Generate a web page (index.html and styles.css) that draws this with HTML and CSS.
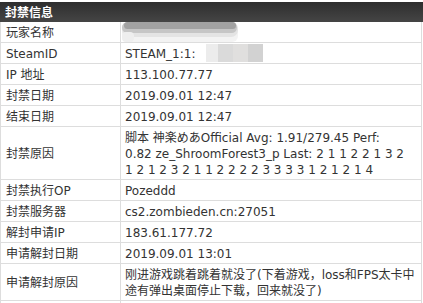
FILE: index.html
```html
<!DOCTYPE html>
<html lang="zh-CN">
<head>
<meta charset="utf-8">
<title>封禁信息</title>
<link rel="stylesheet" href="styles.css">
</head>
<body>
<div class="page">
  <div class="title">封禁信息</div>
  <div class="info">
    <div class="row">
      <div class="key">玩家名称</div>
      <div class="val val-masked"><svg class="blur-name" width="120" height="20" viewBox="0 0 120 20" aria-hidden="true">
        <rect x="0" y="0" width="116" height="20" rx="6" fill="#f3f3f3"/>
        <rect x="0" y="0" width="116" height="15" rx="7" fill="#e4e4e4"/>
        <rect x="0" y="0" width="115" height="11" rx="5.5" fill="#c6c6c6"/>
        <rect x="2" y="0" width="112" height="7" rx="3.5" fill="#a2a2a2"/>
        <rect x="0" y="10" width="12" height="10" rx="4" fill="#eeeeee"/>
      </svg></div>
    </div>
    <div class="row">
      <div class="key">SteamID</div>
      <div class="val val-masked">STEAM_1:1:<span class="blur-id"><i></i><i></i><i></i><i></i></span></div>
    </div>
    <div class="row">
      <div class="key">IP 地址</div>
      <div class="val">113.100.77.77</div>
    </div>
    <div class="row">
      <div class="key">封禁日期</div>
      <div class="val">2019.09.01 12:47</div>
    </div>
    <div class="row">
      <div class="key">结束日期</div>
      <div class="val">2019.09.01 12:47</div>
    </div>
    <div class="row">
      <div class="key">封禁原因</div>
      <div class="val">脚本 神楽めあOfficial Avg: 1.91/279.45 Perf:<br>0.82 ze_ShroomForest3_p Last: 2 1 1 2 2 1 3 2<br>1 2 1 2 3 2 1 1 2 2 2 2 3 3 3 3 1 2 1 2 1 4</div>
    </div>
    <div class="row">
      <div class="key">封禁执行OP</div>
      <div class="val">Pozeddd</div>
    </div>
    <div class="row">
      <div class="key">封禁服务器</div>
      <div class="val">cs2.zombieden.cn:27051</div>
    </div>
    <div class="row">
      <div class="key">解封申请IP</div>
      <div class="val">183.61.177.72</div>
    </div>
    <div class="row">
      <div class="key">申请解封日期</div>
      <div class="val">2019.09.01 13:01</div>
    </div>
    <div class="row">
      <div class="key">申请解封原因</div>
      <div class="val">刚进游戏跳着跳着就没了(下着游戏，loss和FPS太卡中<br>途有弹出桌面停止下载，回来就没了)</div>
    </div>
    <div class="row">
      <div class="key">&nbsp;</div>
      <div class="val">&nbsp;</div>
    </div>
  </div>
</div>
</body>
</html>
```
FILE: styles.css
```css
* { box-sizing: border-box; }
html, body { margin: 0; padding: 0; background: #fff; }
body {
  font-family: "DejaVu Sans", "Noto Sans CJK SC", sans-serif;
  font-size: 12px;
  color: #333;
  overflow: hidden;
}
.page { padding-top: 2px; width: 423px; }
.title {
  height: 20px;
  line-height: 20px;
  padding-left: 5px;
  font-weight: bold;
  font-size: 12px;
  color: #fff;
  background: linear-gradient(#2e2e2e, #454545);
  font-family: "Noto Sans CJK SC", sans-serif;
}
.info {
  width: 422px;
  border-left: 1px solid #ddd;
  border-right: 1px solid #ddd;
}
.row {
  display: grid;
  grid-template-columns: 120px 1fr;
  border-bottom: 1px solid #ddd;
  line-height: 16px;
}
.key {
  border-right: 1px solid #ddd;
  padding: 3px 4px 1px 5px;
  display: flex;
  align-items: center;
}
.val {
  padding: 3px 4px 1px;
  white-space: nowrap;
}
.val-masked { position: relative; }
.blur-name {
  position: absolute;
  left: 1px;
  top: 0;
  z-index: 2;
  display: block;
}
.blur-id {
  position: absolute;
  left: 85px;
  top: 1px;
  height: 18px;
  display: flex;
  z-index: 1;
}
.blur-id i {
  display: block;
  width: 15px;
  height: 18px;
  background: #e2e2e2;
}
.blur-id i:first-child { width: 12px; background: #ececec; }
.blur-id i:nth-child(2) { background: #dadada; }
.blur-id i:nth-child(3) { background: #e0dfde; }
.blur-id i:nth-child(4) { background: #d2d2d2; }
```
